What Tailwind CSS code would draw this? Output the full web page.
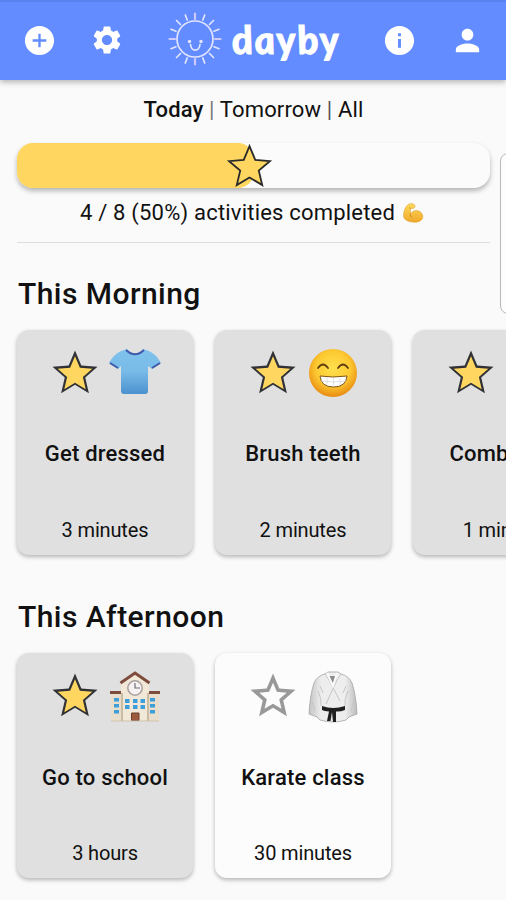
<!DOCTYPE html>
<html lang="en">
<head>
<meta charset="utf-8">
<title>dayby</title>
<script src="https://cdn.jsdelivr.net/npm/@tailwindcss/browser@4"></script>
</head>
<body class="relative flex h-[900px] w-[506px] flex-col overflow-hidden bg-[#fafafa] font-[Roboto,sans-serif] text-[#111]">
<svg class="absolute size-0">
  <defs>
    <symbol id="star" viewBox="0 0 24 24"><path fill="#303235" d="M22 9.24l-7.19-.62L12 2 9.19 8.63 2 9.24l5.46 4.73L5.82 21 12 17.27 18.18 21l-1.63-7.03z"/><path fill="#ffd760" transform="translate(2.76 3) scale(.77)" d="M22 9.24l-7.19-.62L12 2 9.19 8.63 2 9.24l5.46 4.73L5.82 21 12 17.27 18.18 21l-1.63-7.03z"/></symbol>
    <linearGradient id="shirt" x1="0" y1="0" x2="0" y2="1"><stop offset="0" stop-color="#80c2ed"/><stop offset=".5" stop-color="#78bbe8"/><stop offset="1" stop-color="#4b91cf"/></linearGradient>
    <radialGradient id="face" cx=".5" cy=".4" r=".6"><stop offset="0" stop-color="#ffe04f"/><stop offset=".6" stop-color="#fdc931"/><stop offset="1" stop-color="#e88b12"/></radialGradient>
    <linearGradient id="gi" x1="0" y1="0" x2="1" y2="0"><stop offset="0" stop-color="#c4c4c4"/><stop offset=".25" stop-color="#ededed"/><stop offset=".75" stop-color="#eeeeee"/><stop offset="1" stop-color="#bcbcbc"/></linearGradient>
    <linearGradient id="arm" x1="0" y1="0" x2="0" y2="1"><stop offset="0" stop-color="#ffd95c"/><stop offset="1" stop-color="#eea92b"/></linearGradient>
  </defs>
</svg>

<header class="z-10 flex h-20 shrink-0 items-center border-t-2 border-[#5a82ee] bg-[#628cff] pl-[22px] pr-[21px] shadow-[0_2px_6px_rgba(0,0,0,0.3)]">
  <svg class="-mt-0.5 size-[35px] shrink-0" viewBox="0 0 24 24" fill="#fff"><path d="M12 2C6.48 2 2 6.48 2 12s4.48 10 10 10 10-4.48 10-10S17.52 2 12 2zm4.700 10.800h-3.900v3.900h-1.600v-3.900H7.300v-1.600h3.900V7.300h1.600v3.900h3.900z"/></svg>
  <svg class="-mt-0.5 ml-[33px] size-[34px] shrink-0" viewBox="0 0 24 24" fill="#fff"><path d="M19.14 12.94c.04-.3.06-.61.06-.94 0-.32-.02-.64-.07-.94l2.03-1.58c.18-.14.23-.41.12-.61l-1.92-3.32c-.12-.22-.37-.29-.59-.22l-2.39.96c-.5-.38-1.03-.7-1.62-.94l-.36-2.54c-.04-.24-.24-.41-.48-.41h-3.84c-.24 0-.43.17-.47.41l-.36 2.54c-.59.24-1.13.57-1.62.94l-2.39-.96c-.22-.08-.47 0-.59.22L2.74 8.87c-.12.21-.08.47.12.61l2.03 1.58c-.05.3-.09.63-.09.94s.02.64.07.94l-2.03 1.58c-.18.14-.23.41-.12.61l1.92 3.32c.12.22.37.29.59.22l2.39-.96c.5.38 1.03.7 1.62.94l.36 2.54c.05.24.24.41.48.41h3.84c.24 0 .44-.17.47-.41l.36-2.54c.59-.24 1.13-.56 1.62-.94l2.39.96c.22.08.47 0 .59-.22l1.92-3.32c.12-.22.07-.47-.12-.61l-2.01-1.58zM12 15.6c-1.98 0-3.6-1.62-3.6-3.6s1.62-3.6 3.6-3.6 3.6 1.62 3.6 3.6-1.62 3.6-3.6 3.6z"/></svg>
  <svg class="-mt-1 ml-[43px] size-[56px] shrink-0" viewBox="-28 -28 56 56" fill="none" stroke="#e3e5ff" stroke-width="1.7" stroke-linecap="round">
    <circle r="18"/>
    <path stroke="#cdc9fa" stroke-width="2.2" d="M0-20V-25.500M0 20V25.500M-20 0H-25.500M20 0H25.500"/><path d="M7.800-19L9.700-24M14.500-14.500L18.500-18.500M19-7.800L24-9.700M7.800 19L9.700 24M14.500 14.500L18.500 18.500M19 7.800L24 9.700M-7.800-19L-9.700-24M-14.500-14.500L-18.500-18.500M-19-7.800L-24-9.700M-7.800 19L-9.700 24M-14.500 14.500L-18.500 18.500M-19 7.800L-24 9.700"/>
    <path d="M-4.500 5.500C-3.500 13 4 13 5 5.500"/><circle cx="-5.500" cy="2.500" r=".9" fill="#fff"/><circle cx="6" cy="2.500" r=".9" fill="#fff"/>
  </svg>
  <span class="-mt-[5px] ml-[8px] w-[110px] shrink-0 -skew-x-[-9deg] whitespace-nowrap font-[Lato,sans-serif] text-[39px] font-black italic leading-10 tracking-[1.6px] text-white [-webkit-text-stroke:0.8px_#fff]">dayby</span>
  <svg class="-mt-0.5 ml-auto size-[35px] shrink-0" viewBox="0 0 24 24" fill="#fff"><path d="M12 2C6.48 2 2 6.48 2 12s4.48 10 10 10 10-4.48 10-10S17.52 2 12 2zm1 15h-2v-6h2v6zm0-8h-2V7h2v2z"/></svg>
  <svg class="-mt-0.5 ml-[33px] size-[35px] shrink-0" viewBox="0 0 24 24" fill="#fff"><path d="M12 12c2.21 0 4-1.79 4-4s-1.79-4-4-4-4 1.79-4 4 1.79 4 4 4zm0 2c-2.67 0-8 1.34-8 4v2h16v-2c0-2.66-5.33-4-8-4z"/></svg>
</header>

<main class="flex flex-col pl-[17px]">
  <nav class="mr-4 mt-4 text-center text-[22px] leading-7 tracking-[0.15px]"><b class="font-medium">Today</b> <span class="text-[#777]">|</span> Tomorrow <span class="text-[#555]">|</span> All</nav>
  <div class="relative mr-4 mt-[19px] h-[45px] rounded-2xl bg-[#fbfbfb] shadow-[0_3px_5px_rgba(0,0,0,0.28)]">
    <div class="h-full rounded-2xl bg-[#ffd760]" style="width:50%"></div>
    <svg class="absolute -top-[4px] left-[205px] size-[55px]" viewBox="0 0 24 24"><path fill="#ffd760" stroke="#2b2b2b" stroke-width=".8" d="M20.900 9.650L14.500 9.100 12 3.100 9.500 9.100 3.100 9.650 7.950 13.800 6.450 20.100 12 16.800 17.550 20.100 16.050 13.800z"/></svg>
  </div>
  <p class="mr-[19px] mt-[11px] flex items-center justify-center gap-[7px] text-[22px] leading-7 tracking-[0.2px]">4 / 8 (50%) activities completed
    <svg class="size-[22px]" viewBox="0 0 24 24"><path fill="url(#arm)" stroke="#dda02b" stroke-width=".6" d="M7 2.500c2-1 5-1 6.500.5 1 1.200.7 3-.6 3.700-1.200.6-2.500.3-3.400.2-.5 1.800-.4 4 .5 5.800 1.200-2.200 3.500-3.600 6.200-3.300 3.600.3 6.300 3 6.500 6.300.2 4-4.200 6.500-9.500 6.300C7 21.800 2 19.500 1.700 15.500 1.500 10.500 3.500 5 7 2.500z"/><path d="M9 12.500c-.2 2 .5 3.500 2 4.500M9.500 7l-1.500-.7" fill="none" stroke="#c9821b" stroke-width="1"/></svg>
  </p>
  <hr class="mr-4 mt-[15px] border-t-[1.5px] border-[#dedede]">

  <h2 class="ml-px mt-[33px] text-[30px] font-medium leading-9 tracking-[0.45px]">This Morning</h2>
  <section class="mt-[18px] flex gap-[22px]">
    <article class="flex h-[225px] w-[176px] shrink-0 flex-col items-center rounded-xl bg-[#e0e0e0] pt-[15px] shadow-[0_2px_4px_rgba(0,0,0,0.28)]">
      <div class="flex h-[56px] items-center gap-1.5"><svg class="size-[54px]"><use href="#star"/></svg>
        <svg class="size-[54px]" viewBox="0 0 54 54"><path fill="url(#shirt)" d="M13 5L19 3Q27 12 35 3L41 5Q48 8 53 17L44 23 40 20V45Q40 48 37 48H16Q13 48 13 45V20L10 23 1 17Q6 8 13 5z"/><path d="M18 4Q27 12.500 36 4M2 17L10 22M52 17L44 22" fill="none" stroke="#4059aa" stroke-width="2"/></svg></div>
      <h3 class="mt-[39px] text-[22px] font-medium leading-7 tracking-[0.2px]">Get dressed</h3>
      <p class="mt-[50px] text-[20px] leading-6 tracking-[-0.15px]">3 minutes</p>
    </article>
    <article class="flex h-[225px] w-[176px] shrink-0 flex-col items-center rounded-xl bg-[#e0e0e0] pt-[15px] shadow-[0_2px_4px_rgba(0,0,0,0.28)]">
      <div class="flex h-[56px] items-center gap-1.5"><svg class="size-[54px]"><use href="#star"/></svg>
        <svg class="size-[54px]" viewBox="0 0 54 54"><circle cx="27" cy="27" r="24" fill="url(#face)"/><path d="M12 22q5-7 10 0M32 22q5-7 10 0" fill="none" stroke="#61400d" stroke-width="1.800" stroke-linecap="round"/><path d="M14 30Q27 32 41 30Q40 41 27.500 41T14 30z" fill="#fff" stroke="#7d5717" stroke-width="1"/><path d="M15 35Q27 37 40 35M21 32V39M27.500 32V41M34 32V39" fill="none" stroke="#d4d4d4" stroke-width=".7"/></svg></div>
      <h3 class="mt-[39px] text-[22px] font-medium leading-7 tracking-[0.2px]">Brush teeth</h3>
      <p class="mt-[50px] text-[20px] leading-6 tracking-[-0.15px]">2 minutes</p>
    </article>
    <article class="flex h-[225px] w-[176px] shrink-0 flex-col items-center rounded-xl bg-[#e0e0e0] pt-[15px] shadow-[0_2px_4px_rgba(0,0,0,0.28)]">
      <div class="flex h-[56px] items-center gap-1.5"><svg class="size-[54px]"><use href="#star"/></svg><span class="size-[54px]"></span></div>
      <h3 class="mt-[39px] text-[22px] font-medium leading-7 tracking-[0.2px]">Comb hair</h3>
      <p class="mt-[50px] text-[20px] leading-6 tracking-[-0.15px]">1 minute</p>
    </article>
  </section>

  <h2 class="ml-px mt-[44px] text-[30px] font-medium leading-9 tracking-[0.45px]">This Afternoon</h2>
  <section class="mt-[18px] flex gap-[22px]">
    <article class="flex h-[225px] w-[176px] shrink-0 flex-col items-center rounded-xl bg-[#e0e0e0] pt-[15px] shadow-[0_2px_4px_rgba(0,0,0,0.28)]">
      <div class="flex h-[56px] items-center gap-1.5"><svg class="size-[54px]"><use href="#star"/></svg>
        <svg class="size-[54px]" viewBox="0 0 54 54"><path fill="#e9decb" d="M3 24H13V52H3zM41 24H51V52H41z"/><path fill="#f1e8d7" d="M13 14L27 4 41 14V52H13z"/><path fill="#7e4c3c" d="M2 22H13V25H2zM41 22H52V25H41z"/><path d="M12.500 14L27 4 41.500 14" fill="none" stroke="#7e4c3c" stroke-width="3"/><path d="M14 24V52M40 24V52" stroke="#cabba3" stroke-width="2"/><circle cx="27" cy="19" r="7.200" fill="#f6f2f2" stroke="#a9a09d" stroke-width="1.500"/><path d="M27 14V19H32" fill="none" stroke="#766d7c" stroke-width="1.200"/><path fill="#3d9eda" d="M6 29H11V32.500H6zM6 35H11V38.500H6zM6 41H11V44.500H6zM42 29H47V32.500H42zM42 35H47V38.500H42zM42 41H47V44.500H42zM17 30H21.500V34H17zM25 30H29.500V34H25zM32.500 30H37V34H32.500zM17 36H21.500V40H17zM25 36H29.500V40H25zM32.500 36H37V40H32.500z"/><path fill="#9b5a3e" stroke="#6f402f" d="M23.500 44H31V51.500H23.500z"/><path d="M3 52H51" stroke="#cfc3ae"/></svg></div>
      <h3 class="mt-[40px] text-[22px] font-medium leading-7 tracking-[0.2px]">Go to school</h3>
      <p class="mt-[49px] text-[20px] leading-6 tracking-[-0.15px]">3 hours</p>
    </article>
    <article class="flex h-[225px] w-[176px] shrink-0 flex-col items-center rounded-xl bg-[#fcfcfc] pt-[15px] shadow-[0_2px_4px_rgba(0,0,0,0.28)]">
      <div class="flex h-[56px] items-center gap-1.5"><svg class="size-[54px]" viewBox="0 0 24 24" fill="#999"><path d="M22 9.240l-7.190-.620L12 2 9.190 8.630 2 9.240l5.460 4.730L5.820 21 12 17.270 18.180 21l-1.630-7.030L22 9.240zM12 15.400l-3.760 2.270 1-4.280-3.320-2.880 4.380-.380L12 6.100l1.710 4.040 4.380.380-3.320 2.880 1 4.280L12 15.400z"/></svg>
        <svg class="size-[54px]" viewBox="0 0 54 54"><path fill="url(#gi)" stroke="#a5a5a5" stroke-width=".8" d="M22 3H32L35 5Q43 7 46 14Q50 26 51 45L43 48 40 51Q27 55 14 51L11 48 3 45Q4 26 8 14Q11 7 19 5z"/><path fill="#8c8c8c" d="M22.500 7H30L27 15z"/><path d="M19 5L23 11 34 32M35 5L31 11 20 35M12 22Q16 30 15 37M42 22Q38 30 39 37M6 32L9 42M48 32L45 42M14 17L17 24M40 17L37 24" fill="none" stroke="#c6c6c6"/><path d="M21 4L27 17 31 4" fill="none" stroke="#fafafa" stroke-width="2"/><path fill="#202020" d="M16 37Q27 41 39 37V41Q34 43 30 42.500L30 53H27L26 43 24.500 52H21L23 42.500Q18 42 16 41z"/></svg></div>
      <h3 class="mt-[40px] text-[22px] font-medium leading-7 tracking-[0.2px]">Karate class</h3>
      <p class="mt-[49px] text-[20px] leading-6 tracking-[-0.15px]">30 minutes</p>
    </article>
  </section>
</main>
<aside class="absolute left-[500px] top-[153px] h-[161px] w-5 rounded-lg border-[1.5px] border-[#b8b8b8] bg-[#fdfdfd]"></aside>
</body>
</html>
